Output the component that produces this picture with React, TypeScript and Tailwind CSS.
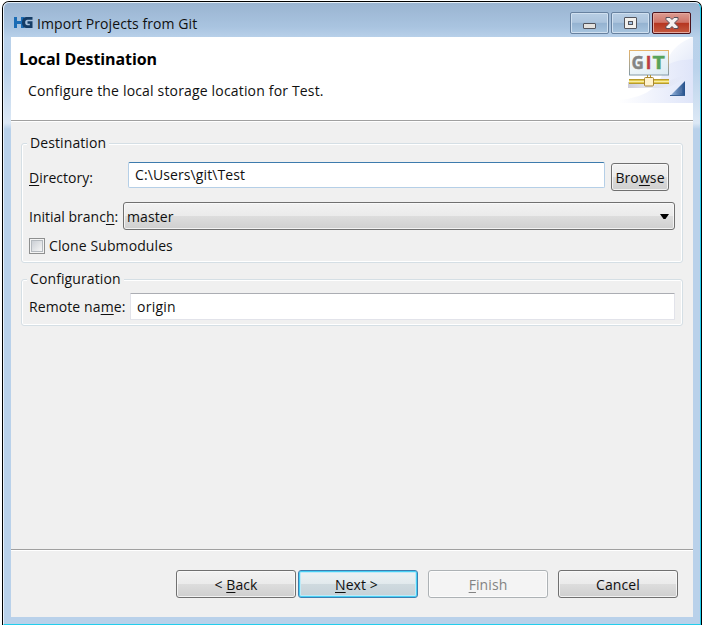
import type { ReactNode } from "react";

const grey =
  "border-[#707070] bg-[linear-gradient(#f2f2f2_0%,#ebebeb_49%,#dddddd_50%,#cfcfcf_100%)] shadow-[inset_0_0_0_1px_#fafafacc]";
const primary =
  "border-[#3c7fb1] bg-[linear-gradient(#edf2f4_0%,#e2eaed_48%,#cfdadf_50%,#c5d1d7_100%)] shadow-[inset_0_0_0_1px_#48d0f5,inset_0_0_0_2px_#bfeaf7]";
const disabled = "border-[#adb2b5] bg-[#f4f4f4] text-[#838383] shadow-[inset_0_0_0_1px_#fcfcfc]";

function Button({ look, className, children }: { look: string; className: string; children: ReactNode }) {
  return (
    <button className={`flex h-7 shrink-0 items-center justify-center whitespace-pre rounded-[3px] border pt-px ${look} ${className}`}>
      {children}
    </button>
  );
}

function Key({ children }: { children: string }) {
  return <span className="underline decoration-1 underline-offset-2">{children}</span>;
}

function Group({ title, className, children }: { title: string; className: string; children: ReactNode }) {
  return (
    <fieldset className={`ml-[10px] w-[662px] rounded-[3px] border border-[#d5dfe5] shadow-[inset_0_0_0_1px_#fff] ${className}`}>
      <legend className="ml-[5px] h-5 bg-[#f0f0f0] px-[3px] leading-5">{title}</legend>
      {children}
    </fieldset>
  );
}

function HgLogo() {
  return (
    <svg width="19" height="11" viewBox="0 0 19 11" className="mt-[5px] shrink-0">
      <path d="M0 0h3v4h4V0h3v11H7V7H3v4H0z" fill="#1b6cb5" />
      <path d="M18.500 0v2.700H13.500c-1.500 0-2.300 1-2.300 2.800s.8 2.800 2.300 2.800h2.300V6.800H13.500V4.300h5V11H12.500c-3 0-4.500-2-4.500-5.500S9.500 0 12.500 0z" fill="#143c66" />
    </svg>
  );
}

function GitBanner() {
  return (
    <svg width="75" height="66" viewBox="0 0 75 66" className="shrink-0">
      <defs>
        <linearGradient id="swoosh" x1="0" x2="1">
          <stop stopColor="#fff" />
          <stop offset="1" stopColor="#dfe5f9" />
        </linearGradient>
        <linearGradient id="curve" x1="0" y1="0" x2="1" y2="1">
          <stop stopColor="#fff" />
          <stop offset="1" stopColor="#e4eaf9" />
        </linearGradient>
        <linearGradient id="frame" x1="0" x2="0" y1="0" y2="1">
          <stop stopColor="#e4b36b" />
          <stop offset="1" stopColor="#839aa7" />
        </linearGradient>
        <linearGradient id="screen" x1="0" x2="1" y1="0" y2="1">
          <stop stopColor="#fafcfd" />
          <stop offset="1" stopColor="#dcebf3" />
        </linearGradient>
        <linearGradient id="corner" x1="0" x2="1">
          <stop stopColor="#9dbbe2" />
          <stop offset="1" stopColor="#24508b" />
        </linearGradient>
        <linearGradient id="shade" x1="0" x2="1">
          <stop stopColor="#c9c8d5" stopOpacity=".9" />
          <stop offset="1" stopColor="#d9dced" stopOpacity="0" />
        </linearGradient>
      </defs>
      <path d="M0 66V63Q45 60 47 24Q57 22 75 22V66z" fill="url(#swoosh)" />
      <path d="M50 22Q56 7 75 0V22Q62 22 51 27z" fill="url(#curve)" />
      <path d="M10 45H48L66 38Q60 49 45 51H10z" fill="url(#shade)" />
      <rect x="11.500" y="13.500" width="39" height="24.500" fill="url(#screen)" stroke="url(#frame)" />
      <g fontFamily="Open Sans, sans-serif" fontWeight="700" fontSize="17" strokeWidth=".4">
        <text x="13.500" y="32" fill="#848484" stroke="#848484" textLength="12.500" lengthAdjust="spacingAndGlyphs">G</text>
        <text x="27.800" y="32" fill="#bd3b42" stroke="#bd3b42">I</text>
        <text x="34.500" y="32" fill="#58a35a" stroke="#58a35a" textLength="12.500" lengthAdjust="spacingAndGlyphs">T</text>
      </g>
      <path d="M11 42.500H51M11 46.500H51" stroke="#b89c2c" />
      <path d="M11 43.500H51M11 45.500H51" stroke="#e2c94f" />
      <path d="M11 44.500H51" stroke="#f8eda4" />
      <path d="M29.500 38V41M32.500 38V41" stroke="#b29532" />
      <rect x="26.500" y="40.500" width="9" height="8.500" rx="1" fill="#fff3ce" stroke="#a98532" />
      <path d="M52 59L67 44V59z" fill="url(#corner)" />
      <path d="M58 56L64 50V56z" fill="#5e7dad" opacity=".5" />
      <path d="M52 58.500H67" stroke="#3a6297" />
    </svg>
  );
}

const caption =
  "flex h-[22px] items-center justify-center rounded-[2px] border border-[#67819f] bg-[linear-gradient(#b8cee4_0%,#acc4dd_47%,#94b2d0_50%,#a8c5df_100%)] shadow-[inset_0_0_0_1px_#d0e0f0]";

export default function App() {
  return (
    <div className="h-[626px] w-[702px] overflow-hidden bg-white pl-[2px] pt-px font-['Open_Sans','Noto_Sans',sans-serif] text-[14px] leading-5 tracking-[0.1px] text-[#101010]">
      <div className="flex h-[624px] w-[700px] flex-col rounded-t-[7px] border-l border-r border-t border-l-black border-r-black border-t-black bg-[#b9d1ea]">
        <div className="flex h-[623px] flex-col rounded-t-[6px] border-b border-l border-r border-t border-b-[#22cdec] border-l-[#e9f2fb] border-r-[#22cdec] border-t-[#e6eff8] bg-[linear-gradient(#9ab4d1_0px,#a9c4e0_24px,#b9d1ea_35px,#bad2eb_65px,#dce8f5_120px,#b9d1ea_126px)] px-[7px]">
          <header className="flex h-[34px] shrink-0 items-center pl-[3px]">
            <HgLogo />
            <h1 className="ml-[4px] pt-[7px] tracking-[0.08px]">Import Projects from Git</h1>
            <div className="ml-auto mr-[2px] flex gap-[2px] pt-[6px]">
              <button className={`${caption} w-[39px]`}>
                <span className="mt-[6px] h-[6px] w-[13px] rounded-[1px] border border-[#53545c] bg-[#e4e2df]" />
              </button>
              <button className={`${caption} w-[39px]`}>
                <span className="flex h-3 w-[13px] items-center justify-center rounded-[1px] border border-[#53545c] bg-[#f2f1ee]">
                  <span className="h-1 w-[5px] border border-[#53545c] bg-[#a8c5e4]" />
                </span>
              </button>
              <button className="flex h-[22px] w-[39px] items-center justify-center rounded-[2px] border border-[#4a121c] bg-[linear-gradient(#dc9b91_0%,#cf7468_47%,#b53520_50%,#c55a40_100%)] shadow-[inset_0_0_0_1px_#e6aa9f]">
                <svg width="14" height="12" viewBox="0 0 14 12">
                  <path d="M1 .5h4l2 2 2-2h4v2L9.500 6l3.500 3.500v2H9l-2-2-2 2H1v-2L4.500 6 1 2.500z" fill="#f6f1ef" stroke="#56515c" />
                </svg>
              </button>
            </div>
          </header>
          <main className="flex h-[580px] shrink-0 flex-col bg-[#f0f0f0]">
            <section className="flex h-[84px] shrink-0 justify-between border-b border-[#a0a0a0] bg-white">
              <div className="pl-[8px] pt-[12px]">
                <h2 className="text-[16px] font-bold leading-5 tracking-[-0.08px] text-black">Local Destination</h2>
                <p className="mt-[12px] pl-[9px] tracking-[0.17px]">Configure the local storage location for Test.</p>
              </div>
              <GitBanner />
            </section>
            <section className="h-[428px] shrink-0 border-t border-white pt-[11px]">
              <Group title="Destination" className="h-[130px]">
                <div className="flex pl-[7px] pt-[9px]">
                  <label className="w-[99px] pt-[6px] tracking-normal"><Key>D</Key>irectory:</label>
                  <input readOnly value="C:\Users\git\Test" className="h-[26px] w-[477px] rounded-[2px] border border-[#b5cfe7] border-t-[#3d7bad] bg-white px-[6px] pb-[2px] outline-none" />
                  <Button look={grey} className="ml-[6px] mt-px w-[58px]"><span>Bro<Key>w</Key>se</span></Button>
                </div>
                <div className="mt-[11px] flex pl-[7px]">
                  <label className="w-[94px] whitespace-nowrap pt-[5px] tracking-normal">Initial branc<Key>h</Key>:</label>
                  <div className={`flex h-7 w-[552px] items-center justify-between rounded-[3px] border pl-[3px] pr-[5px] pt-px ${grey}`}>
                    <span>master</span>
                    <svg width="9" height="5" viewBox="0 0 9 5"><path d="M0 0h9L5.500 5h-2z" fill="#000" /></svg>
                  </div>
                </div>
                <label className="mt-[6px] flex items-center pl-[7px]">
                  <span className="mr-1 flex size-4 items-center justify-center border border-[#8e8f8f] bg-[#f4f4f4]">
                    <span className="size-3 border border-[#b4b9be] bg-[linear-gradient(135deg,#cbcfd5,#f6f6f6)]" />
                  </span>
                  Clone Submodules
                </label>
              </Group>
              <Group title="Configuration" className="mt-[6px] h-[57px]">
                <div className="flex pl-[7px] pt-[4px]">
                  <label className="w-[101px] whitespace-nowrap pt-[4px]">Remote na<Key>m</Key>e:</label>
                  <input readOnly value="origin" className="h-[27px] w-[545px] rounded-[1px] border border-[#e2e3ea] border-t-[#abadb3] bg-white px-[6px] tracking-[0.25px] outline-none" />
                </div>
              </Group>
            </section>
            <footer className="flex h-[68px] shrink-0 border-t border-[#a0a0a0] pl-[165px] pt-[20px] shadow-[inset_0_1px_0_#fff]">
              <Button look={grey} className="w-[120px]">&lt; <Key>B</Key>ack</Button>
              <Button look={primary} className="ml-[2px] w-[120px] pr-[3px]"><Key>N</Key>ext &gt;</Button>
              <Button look={disabled} className="ml-[10px] w-[120px]"><Key>F</Key>inish</Button>
              <Button look={grey} className="ml-[10px] w-[120px]">Cancel</Button>
            </footer>
          </main>
        </div>
      </div>
    </div>
  );
}
